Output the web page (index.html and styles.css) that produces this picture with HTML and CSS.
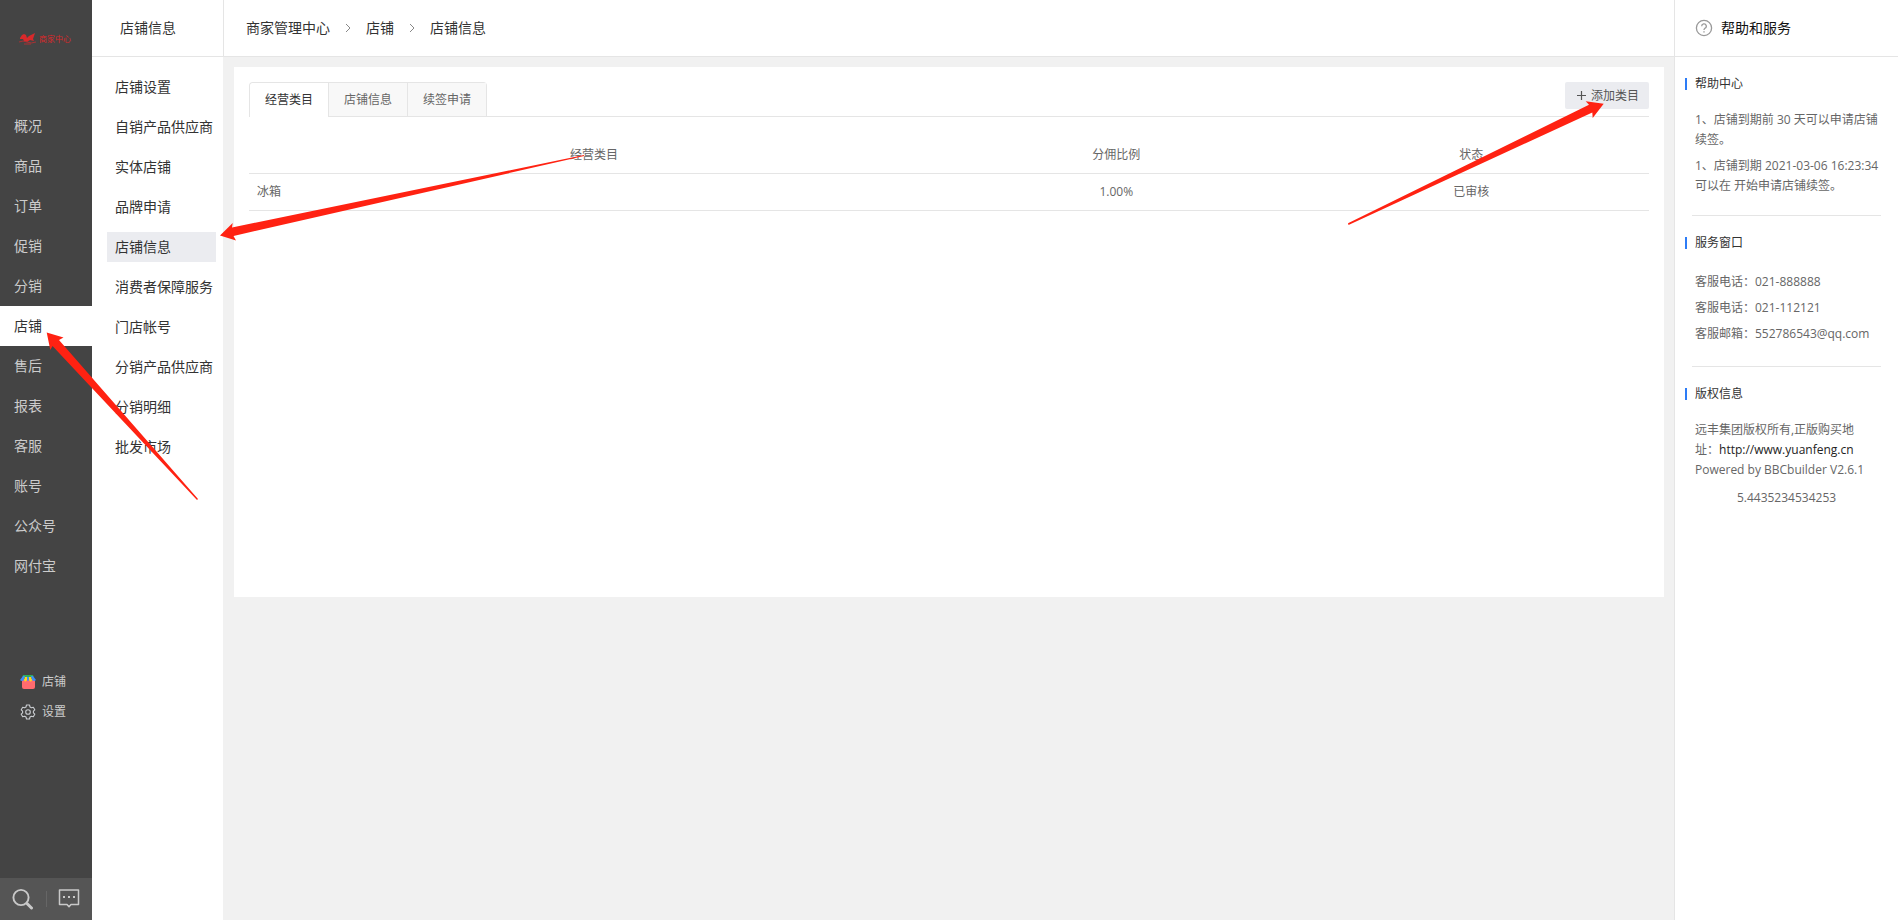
FILE: index.html
```html
<!DOCTYPE html>
<html lang="zh-CN">
<head>
    <meta charset="UTF-8">
    <meta name="viewport" content="width=device-width, initial-scale=1.0">
    <title>商家管理中心</title>
    <link rel="stylesheet" href="styles.css">
</head>
<body>
    <div class="layout">
        <aside class="sidebar">
            <a class="logo" href="#">
                <svg width="18" height="12" viewBox="0 0 18 12">
                    <path d="M1 5 L3 2 L5 1 L7 2 L8 5 L10 3 L16 0 L15 3 L14 6 L15 8 L11 7 L8 9 L5 8 L4 6 L1 6 Z" fill="#d8292b"/>
                    <path d="M0 9 Q4 7 8 9 T17 9 M5 11 H12" fill="none" stroke="#a83234" stroke-width="1"/>
                </svg>
                <span>商家中心</span>
            </a>
            <nav class="main-nav">
                <a href="#">概况</a>
                <a href="#">商品</a>
                <a href="#">订单</a>
                <a href="#">促销</a>
                <a href="#">分销</a>
                <a href="#" class="active">店铺</a>
                <a href="#">售后</a>
                <a href="#">报表</a>
                <a href="#">客服</a>
                <a href="#">账号</a>
                <a href="#">公众号</a>
                <a href="#">网付宝</a>
            </nav>
            <div class="quick-links">
                <a href="#">
                    <svg width="16" height="16" viewBox="0 0 16 16">
                        <rect x="2" y="5" width="13" height="10" rx="2" fill="#ff6b6f"/>
                        <path d="M3 1 H13 L14 4 H2 Z" fill="#2fae5b"/>
                        <path d="M3 2 L5 2 L4 6 Q2 8 0 6 Z M13 2 L11 2 L12 6 Q14 8 16 6 Z" fill="#3d8df5"/>
                        <path d="M5 3 H7 V6 Q5 9 4 6 Z M9 3 H11 L12 6 Q11 9 9 6 Z" fill="#ffd91a"/>
                        <path d="M7 3 H9 V6 Q8 8 7 6 Z" fill="#3d8df5"/>
                    </svg>
                    <span>店铺</span>
                </a>
                <a href="#">
                    <svg width="16" height="16" viewBox="0 0 16 16" fill="none" stroke="#c9ccd0" stroke-width="1.1" stroke-linejoin="round">
                        <path d="M6.5 1 H9.5 L10 3 L11.4 3.8 L13.3 3.2 L14.8 5.8 L13.4 7.2 V8.8 L14.8 10.2 L13.3 12.8 L11.4 12.2 L10 13 L9.5 15 H6.5 L6 13 L4.6 12.2 L2.7 12.8 L1.2 10.2 L2.6 8.8 V7.2 L1.2 5.8 L2.7 3.2 L4.6 3.8 L6 3 Z"/>
                        <circle cx="8" cy="8" r="2.3"/>
                    </svg>
                    <span>设置</span>
                </a>
            </div>
            <div class="tools">
                <button type="button" aria-label="搜索">
                    <svg width="22" height="22" viewBox="0 0 22 22" fill="none" stroke="#c9c9c9">
                        <circle cx="9" cy="9.5" r="7.6" stroke-width="1.9"/>
                        <path d="M15 15.5 L19.5 20" stroke-width="3" stroke-linecap="round"/>
                    </svg>
                </button>
                <button type="button" aria-label="消息">
                    <svg width="22" height="22" viewBox="0 0 22 22" fill="none" stroke="#c9c9c9" stroke-width="1.5">
                        <path d="M1.5 2 H20.5 V16.5 H13 L11 18.8 L9 16.5 H1.5 Z" stroke-linejoin="round"/>
                        <path d="M5 9 H7 M10 9 H12 M15 9 H17" stroke-width="2"/>
                    </svg>
                </button>
            </div>
        </aside>

        <aside class="submenu">
            <h2>店铺信息</h2>
            <nav>
                <a href="#">店铺设置</a>
                <a href="#">自销产品供应商</a>
                <a href="#">实体店铺</a>
                <a href="#">品牌申请</a>
                <a href="#" class="active">店铺信息</a>
                <a href="#">消费者保障服务</a>
                <a href="#">门店帐号</a>
                <a href="#">分销产品供应商</a>
                <a href="#">分销明细</a>
                <a href="#">批发市场</a>
            </nav>
        </aside>

        <main class="content">
            <header class="breadcrumb">
                <a href="#">商家管理中心</a>
                <svg width="6" height="10" viewBox="0 0 6 10"><path d="M1 1 L5 5 L1 9"/></svg>
                <a href="#">店铺</a>
                <svg width="6" height="10" viewBox="0 0 6 10"><path d="M1 1 L5 5 L1 9"/></svg>
                <a href="#">店铺信息</a>
            </header>
            <section class="card">
                <div class="toolbar">
                    <div class="tabs">
                        <a href="#" class="active">经营类目</a>
                        <a href="#">店铺信息</a>
                        <a href="#">续签申请</a>
                    </div>
                    <button type="button" class="add-btn">
                        <svg width="9" height="9" viewBox="0 0 9 9"><path d="M4.5 0 V9 M0 4.5 H9" stroke="#555" stroke-width="1.2"/></svg>
                        <span>添加类目</span>
                    </button>
                </div>
                <table>
                    <thead>
                        <tr>
                            <th class="col-name">经营类目</th>
                            <th class="col-rate">分佣比例</th>
                            <th>状态</th>
                        </tr>
                    </thead>
                    <tbody>
                        <tr>
                            <td class="col-name">冰箱</td>
                            <td>1.00%</td>
                            <td>已审核</td>
                        </tr>
                    </tbody>
                </table>
            </section>
        </main>

        <aside class="help">
            <header>
                <svg width="18" height="18" viewBox="0 0 18 18" fill="none" stroke="#999">
                    <circle cx="9" cy="9" r="7.6" stroke-width="1.3"/>
                    <path d="M6.7 7.2 A2.3 2.3 0 1 1 10 9.2 Q9 9.8 9 11" stroke-width="1.3"/>
                    <path d="M9 12.2 V13.6" stroke-width="1.4"/>
                </svg>
                <h2>帮助和服务</h2>
            </header>
            <section>
                <h3>帮助中心</h3>
                <p>1、店铺到期前 30 天可以申请店铺续签。</p>
                <p>1、店铺到期 2021-03-06 16:23:34 可以在 开始申请店铺续签。</p>
            </section>
            <section>
                <h3>服务窗口</h3>
                <ul>
                    <li>客服电话：021-888888</li>
                    <li>客服电话：021-112121</li>
                    <li>客服邮箱：552786543@qq.com</li>
                </ul>
            </section>
            <section>
                <h3>版权信息</h3>
                <p>远丰集团版权所有,正版购买地<br>址：<a href="#">http://www.yuanfeng.cn</a><br>Powered by BBCbuilder V2.6.1</p>
                <p class="version">5.4435234534253</p>
            </section>
        </aside>
    </div>

    <!-- guide arrows over the page -->
    <svg class="arrow arrow-left" width="600" height="520" viewBox="0 0 600 520">
        <path d="M46.7 332.5 L63.5 337.5 L59 340 L198 499 L197 500 L52.5 346 L50.3 350 Z"/>
        <path d="M220 235.5 L232.7 223 L232 227.5 L584 155 L584 156 L233.5 236 L236 240.5 Z"/>
    </svg>
    <svg class="arrow arrow-right" width="300" height="150" viewBox="0 0 300 150">
        <path d="M255.7 13.7 L237.7 11.3 L241 14.7 L0 133.3 L0.5 135 L244.3 22.5 L244.7 28 Z"/>
    </svg>
</body>
</html>
```

FILE: styles.css
```css
:root {
    --dark: #444;
    --line: #e5e5e5;
    --page: #f1f1f1;
    --hover: #ebecf0;
    --text: #333;
    --muted: #666;
    --blue: #2d7cf6;
}

* {
    box-sizing: border-box;
}

body {
    margin: 0;
    position: relative;
    background: var(--page);
    color: var(--text);
    font-family: "Open Sans", "Noto Sans CJK SC", sans-serif;
    font-size: 12px;
    line-height: 20px;
}

a {
    color: inherit;
    text-decoration: none;
}

button {
    border: none;
    padding: 0;
    background: none;
    font: inherit;
    color: inherit;
    cursor: pointer;
}

h2, h3, p, ul {
    margin: 0;
    padding: 0;
    font-weight: normal;
}

svg {
    flex: none;
}

.layout {
    display: flex;
    min-height: 100vh;
}

/* dark sidebar */
.sidebar {
    flex: 0 0 92px;
    display: flex;
    flex-direction: column;
    background: var(--dark);
    color: #ccc;
}

.logo {
    display: flex;
    align-items: center;
    gap: 2px;
    height: 106px;
    padding: 0 0 28px 19px;
    color: #d8292b;
    font-size: 8px;
}

.main-nav a {
    display: block;
    padding-left: 14px;
    font-size: 14px;
    line-height: 40px;
}

.main-nav .active {
    background: #fff;
    color: var(--text);
}

.quick-links {
    margin: 81px 0 auto;
}

.quick-links a {
    display: flex;
    align-items: center;
    gap: 6px;
    height: 30px;
    padding-left: 20px;
}

.tools {
    display: flex;
    height: 42px;
    background: #555;
}

.tools button {
    flex: 1;
    display: flex;
    align-items: center;
    justify-content: center;
}

.tools button + button::before {
    content: "";
    width: 1px;
    height: 16px;
    margin-right: 11px;
    background: #666;
}

.tools button + button {
    justify-content: flex-start;
}

/* second level menu */
.submenu {
    flex: 0 0 131px;
    background: #fff;
}

.submenu h2 {
    height: 57px;
    padding-left: 28px;
    border-bottom: 1px solid var(--line);
    font-size: 14px;
    line-height: 56px;
}

.submenu nav {
    display: flex;
    flex-direction: column;
    gap: 10px;
    padding: 15px 7px 15px 15px;
}

.submenu nav a {
    padding-left: 8px;
    font-size: 14px;
    line-height: 30px;
    white-space: nowrap;
}

.submenu nav .active {
    background: var(--hover);
}

/* content */
.content {
    flex: 1;
    min-width: 0;
}

.breadcrumb {
    display: flex;
    align-items: center;
    gap: 15px;
    height: 57px;
    padding-left: 22px;
    background: #fff;
    border-left: 1px solid var(--line);
    border-bottom: 1px solid var(--line);
    font-size: 14px;
}

.breadcrumb path {
    fill: none;
    stroke: #888;
}

.card {
    min-height: 530px;
    margin: 10px 10px 10px 11px;
    padding: 15px;
    background: #fff;
    color: var(--muted);
}

.toolbar {
    display: flex;
    align-items: flex-start;
    justify-content: space-between;
    border-bottom: 1px solid var(--line);
}

.tabs {
    display: flex;
    margin-bottom: -1px;
    border: 1px solid var(--line);
    border-bottom: none;
    border-radius: 4px 4px 0 0;
}

.tabs a {
    padding: 0 15px;
    background: #f8f8f8;
    border-bottom: 1px solid var(--line);
    line-height: 33px;
}

.tabs a + a {
    border-left: 1px solid var(--line);
}

.tabs .active {
    background: #fff;
    border-bottom-color: #fff;
    border-radius: 4px 0 0 0;
    color: var(--text);
}

.add-btn {
    display: flex;
    align-items: center;
    gap: 5px;
    height: 27px;
    padding: 0 10px 0 12px;
    background: var(--hover);
    border-radius: 2px;
    color: #555;
}

table {
    width: 100%;
    margin-top: 19px;
    border-collapse: collapse;
    table-layout: fixed;
}

th, td {
    height: 37px;
    padding: 0 8px;
    border-bottom: 1px solid var(--line);
    font-weight: normal;
    text-align: center;
}

th {
    padding-top: 2px;
}

.col-name {
    width: 49.3%;
}

.col-rate {
    width: 25.3%;
}

td.col-name {
    text-align: left;
}

/* help panel */
.help {
    flex: 0 0 224px;
    background: #fff;
    border-left: 1px solid var(--line);
    color: var(--muted);
}

.help header {
    display: flex;
    align-items: center;
    gap: 8px;
    height: 57px;
    padding-left: 20px;
    border-bottom: 1px solid var(--line);
    color: #111;
}

.help h2 {
    font-size: 14px;
}

.help section {
    margin: 0 17px;
    padding: 17px 0 19px;
}

.help section + section {
    border-top: 1px solid var(--line);
}

.help h3 {
    display: flex;
    align-items: center;
    gap: 8px;
    margin: 0 0 16px -7px;
    color: var(--text);
    font-size: 12px;
}

.help h3::before {
    content: "";
    width: 2px;
    height: 12px;
    background: var(--blue);
}

.help p {
    margin: 0 -7px 6px 3px;
}

.help p:last-child {
    margin-bottom: 0;
}

.help p a {
    color: #222;
}

.help .version {
    margin: 8px 0 0;
    text-align: center;
}

.help ul {
    margin-left: 3px;
    list-style: none;
    line-height: 26px;
    white-space: nowrap;
}

.arrow {
    position: absolute;
    top: 0;
    left: 0;
    fill: #ff2212;
    pointer-events: none;
}

.arrow-right {
    top: 90px;
    left: auto;
    right: 250px;
}
```
